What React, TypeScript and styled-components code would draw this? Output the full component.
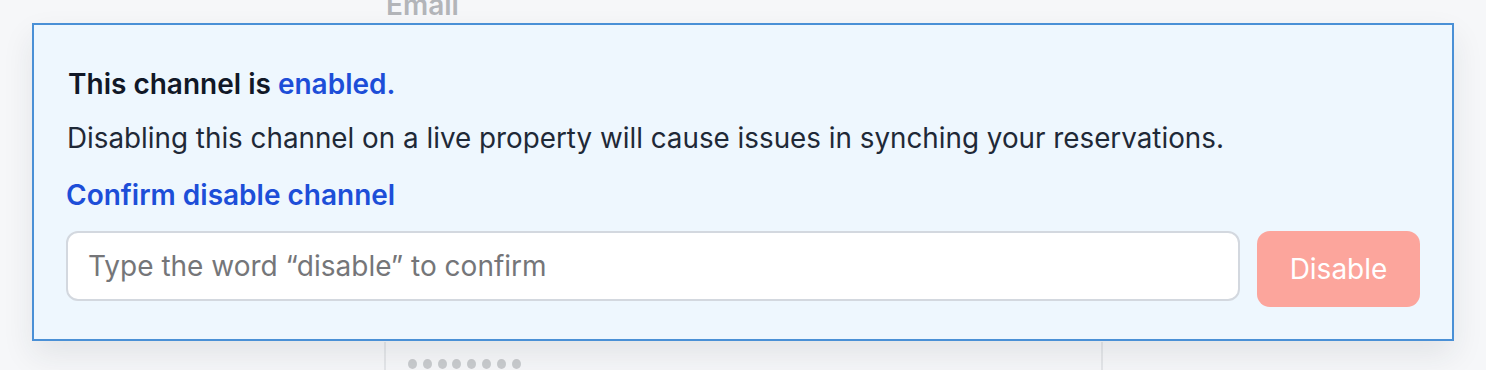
import React from 'react'
import styled, { createGlobalStyle } from 'styled-components'

const GlobalStyle = createGlobalStyle`
  html, body {
    margin: 0;
    padding: 0;
    background: #f6f7f9;
    font-family: Inter, "Noto Sans", sans-serif;
  }
  * { box-sizing: border-box; }
`;

const Page = styled.div`
  position: relative;
  width: 1486px;
  height: 370px;
  overflow: hidden;
  background: #f6f7f9;
`;

const Table = styled.div`
  display: grid;
  grid-template-columns: 384px 717px 1fr;
  grid-template-rows: 342px 1fr;
  height: 100%;
`;

const HeadCell = styled.div`
  padding-left: 2px;
  margin-top: -12px;
  font-size: 28px;
  line-height: 34px;
  font-weight: 600;
  color: #b3b5b9;
`;

const BodyCell = styled.div<{ $divider?: boolean }>`
  border-left: ${p => (p.$divider ? '2px solid #e4e6e9' : 'none')};
  display: flex;
  align-items: center;
  padding-left: 22px;
  padding-top: 16px;
`;

const Dots = styled.div`
  display: flex;
  gap: 5.8px;
`;

const Dot = styled.span`
  width: 9px;
  height: 10px;
  border-radius: 50%;
  background: #c9cbce;
`;

const Panel = styled.div`
  position: absolute;
  top: 23px;
  left: 32px;
  width: 1422px;
  height: 318px;
  background: #eef7fe;
  border: 2px solid #4a90d6;
  box-shadow: 0 14px 30px rgba(30, 40, 60, 0.09);
  padding: 42px 32px 0 32px;
  display: flex;
  flex-direction: column;
`;

const Title = styled.div`
  font-size: 28px;
  font-weight: 600;
  line-height: 34px;
  color: #111827;
  padding-left: 2px;
`;

const Accent = styled.span`
  color: #1d4ed8;
`;

const Message = styled.p`
  margin: 20px 0 0;
  font-size: 27.8px;
  line-height: 34px;
  color: #1f2937;
  padding-left: 1px;
`;

const ConfirmLabel = styled.div`
  margin-top: 23px;
  font-size: 28px;
  font-weight: 600;
  line-height: 34px;
  color: #1d4ed8;
`;

const Row = styled.div`
  margin-top: 19px;
  display: flex;
  align-items: flex-start;
  gap: 17px;
`;

const Input = styled.input`
  flex: 1;
  height: 70px;
  border: 2px solid #d3d8df;
  border-radius: 12px;
  background: #ffffff;
  padding: 0 20px;
  font-family: Inter, "Noto Sans", sans-serif;
  font-size: 28px;
  color: #1f2937;
  outline: none;
  &::placeholder {
    color: #757679;
  }
`;

const Button = styled.button`
  width: 163px;
  height: 76px;
  margin-top: 0;
  border: none;
  border-radius: 13px;
  background: #fca59c;
  color: #ffffff;
  font-family: Inter, "Noto Sans", sans-serif;
  font-size: 28px;
  font-weight: 400;
  cursor: not-allowed;
`;

export default function App() {
  return (
    <>
      <GlobalStyle />
      <Page>
        <Table>
          <div />
          <HeadCell>Email</HeadCell>
          <div />
          <div />
          <BodyCell $divider>
            <Dots>
              {Array.from({ length: 8 }).map((_, i) => (
                <Dot key={i} />
              ))}
            </Dots>
          </BodyCell>
          <BodyCell $divider />
        </Table>
        <Panel>
          <Title>
            This channel is <Accent>enabled.</Accent>
          </Title>
          <Message>
            Disabling this channel on a live property will cause issues in synching your reservations.
          </Message>
          <ConfirmLabel>Confirm disable channel</ConfirmLabel>
          <Row>
            <Input placeholder="Type the word “disable” to confirm" />
            <Button disabled>Disable</Button>
          </Row>
        </Panel>
      </Page>
    </>
  )
}
